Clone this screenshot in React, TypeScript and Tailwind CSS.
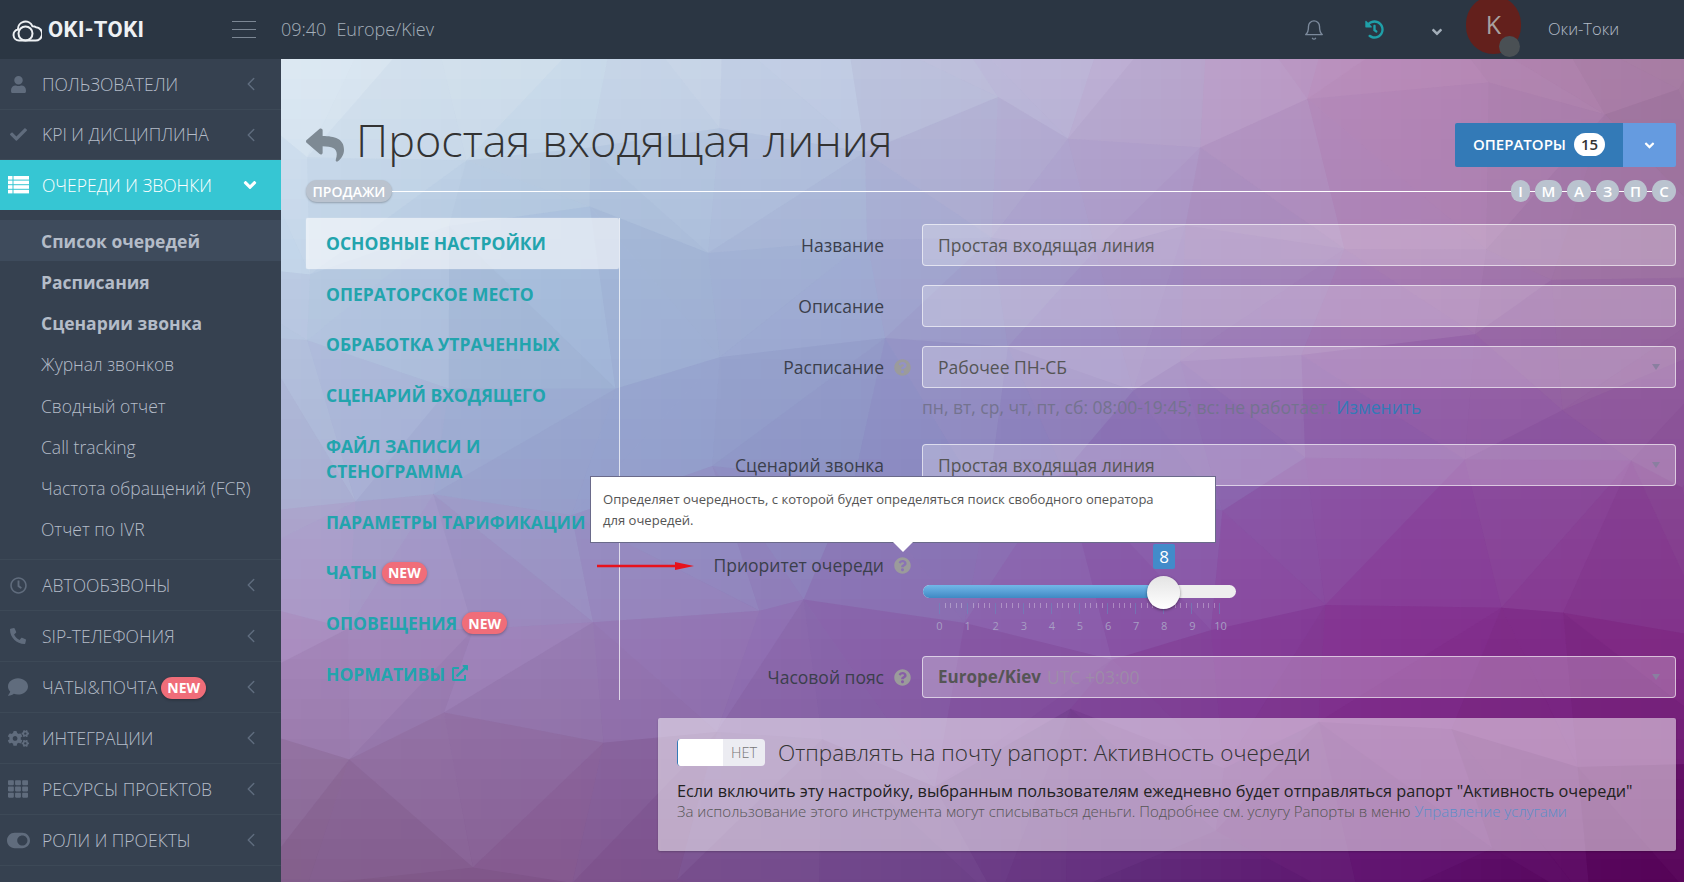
import type { ReactNode } from "react";
import {
  FaAngleDown,
  FaCheck,
  FaCogs,
  FaComment,
  FaExternalLinkAlt,
  FaHistory,
  FaPhone,
  FaQuestionCircle,
  FaRegClock,
  FaReply,
  FaTh,
  FaToggleOn,
  FaUser,
} from "react-icons/fa";
import { FiBell, FiChevronLeft } from "react-icons/fi";

// low-poly backdrop: smooth colour field with a soft jittered mesh on top
const FIELD = [
  ["#e0ebf3", "#cfdeec", "#c0cbe2", "#bdb0d4", "#b98ab9", "#a47a9f"],
  ["#bed1e6", "#a8bfdb", "#a3b0d4", "#a593c4", "#a97fb3", "#9a6f9f"],
  ["#adb5d6", "#96a5cf", "#8c93c5", "#8a73b5", "#8b55a5", "#8a5098"],
  ["#ab8dc0", "#9a80b8", "#8b68ae", "#8a4ea3", "#84308f", "#7f2a85"],
  ["#7d5a85", "#7f5288", "#6f4688", "#5e2a78", "#5c0f6b", "#520052"],
];
const FX = [0, 279, 559, 839, 1119, 1403];
const FY = [0, 191, 391, 591, 823];

function hex(c: string) {
  return [1, 3, 5].map((i) => parseInt(c.slice(i, i + 2), 16));
}

function colorAt(x: number, y: number, shade: number) {
  let i = 0;
  while (i < FX.length - 2 && x > FX[i + 1]) i++;
  let j = 0;
  while (j < FY.length - 2 && y > FY[j + 1]) j++;
  const u = Math.min(1, Math.max(0, (x - FX[i]) / (FX[i + 1] - FX[i])));
  const v = Math.min(1, Math.max(0, (y - FY[j]) / (FY[j + 1] - FY[j])));
  const [a, b, c, d] = [FIELD[j][i], FIELD[j][i + 1], FIELD[j + 1][i], FIELD[j + 1][i + 1]].map(hex);
  const rgb = a.map((_, k) => {
    const top = a[k] + (b[k] - a[k]) * u;
    const bottom = c[k] + (d[k] - c[k]) * u;
    return Math.round(Math.min(255, Math.max(0, top + (bottom - top) * v + shade)));
  });
  return `rgb(${rgb.join(",")})`;
}

function buildMesh() {
  let seed = 17;
  const rnd = () => {
    seed = (seed * 16807) % 2147483647;
    return seed / 2147483647;
  };
  const step = 125;
  const cols = 13;
  const rows = 8;
  const pts: [number, number][][] = [];
  for (let r = 0; r < rows; r++) {
    const row: [number, number][] = [];
    for (let c = 0; c < cols; c++) {
      row.push([(c - 0.5) * step + (rnd() - 0.5) * 85, (r - 0.5) * step + (rnd() - 0.5) * 85]);
    }
    pts.push(row);
  }
  const tris: { p: string; fill: string }[] = [];
  const add = (a: [number, number], b: [number, number], c: [number, number]) => {
    const cx = (a[0] + b[0] + c[0]) / 3;
    const cy = (a[1] + b[1] + c[1]) / 3;
    tris.push({ p: [a, b, c].map((q) => q.join(",")).join(" "), fill: colorAt(cx, cy, (rnd() - 0.5) * 6) });
  };
  for (let r = 0; r < rows - 1; r++) {
    for (let c = 0; c < cols - 1; c++) {
      if (rnd() > 0.5) {
        add(pts[r][c], pts[r][c + 1], pts[r + 1][c]);
        add(pts[r][c + 1], pts[r + 1][c + 1], pts[r + 1][c]);
      } else {
        add(pts[r][c], pts[r][c + 1], pts[r + 1][c + 1]);
        add(pts[r][c], pts[r + 1][c + 1], pts[r + 1][c]);
      }
    }
  }
  return tris;
}

const MESH = buildMesh();

const CELLS: { x: number; y: number; fill: string }[] = [];
for (let y = 0; y < 823; y += 20) {
  for (let x = 0; x < 1403; x += 20) {
    CELLS.push({ x, y, fill: colorAt(x + 10, y + 10, 0) });
  }
}

function Backdrop() {
  return (
    <svg className="absolute inset-0 h-full w-full" viewBox="0 0 1403 823" preserveAspectRatio="none">
      {CELLS.map((c) => (
        <rect key={`${c.x}-${c.y}`} x={c.x} y={c.y} width="21" height="21" fill={c.fill} />
      ))}
      {MESH.map((t, i) => (
        <polygon key={i} points={t.p} fill={t.fill} fillOpacity="0.55" />
      ))}
    </svg>
  );
}

function Logo() {
  return (
    <svg width="30" height="24" viewBox="0 0 30 24" fill="none" stroke="#eef1f4" strokeWidth="2">
      <path d="M7 22.5a5.5 5.5 0 0 1-1-10.9 7.5 7.5 0 0 1 14.4-3.4 5.5 5.5 0 0 1 3.6 1 6.6 6.6 0 0 1-1 13.3z" />
      <circle cx="13.5" cy="15.5" r="7" />
    </svg>
  );
}

// four-row list icon of the active menu entry
function RowsIcon() {
  return (
    <svg width="21" height="18" viewBox="0 0 21 18" fill="currentColor">
      {[0, 4.6, 9.2, 13.8].map((y) => (
        <g key={y}>
          <rect y={y} width="4.5" height="3.6" />
          <rect x="5.5" y={y} width="15.5" height="3.6" />
        </g>
      ))}
    </svg>
  );
}

function NewBadge() {
  return (
    <span className="inline-flex h-[22px] w-[45px] items-center justify-center rounded-full bg-[#f06d79] text-[14px] font-bold text-white shadow-[0_1px_3px_rgba(0,0,0,0.3)]">
      NEW
    </span>
  );
}

interface NavItemProps {
  icon: ReactNode;
  label: string;
  badge?: boolean;
  compact?: boolean;
}

function NavItem({ icon, label, badge, compact }: NavItemProps) {
  return (
    <div className={`flex items-center border-b border-[#3d4957] text-[#b4bcc8] ${compact ? "h-[50px]" : "h-[51px]"}`}>
      <span className="flex w-[42px] justify-center pr-[6px] text-[#606c7d]">{icon}</span>
      <span className="text-[17.5px] font-light">{label}</span>
      {badge && (
        <span className="ml-[4px]">
          <NewBadge />
        </span>
      )}
      <FiChevronLeft className="mr-[19px] ml-auto text-[#5f6c7e]" size={22} strokeWidth={1.6} />
    </div>
  );
}

function SubItem({ label, bold, active }: { label: string; bold?: boolean; active?: boolean }) {
  return (
    <div
      className={`flex h-[41.25px] items-center pl-[41px] text-[17.5px] text-[#b4bcc8] ${
        bold ? "font-bold" : "font-light"
      } ${active ? "bg-[#3e4b5c]" : ""}`}
    >
      {label}
    </div>
  );
}

function Sidebar() {
  return (
    <aside className="w-[281px] shrink-0 bg-[#364150]">
      <NavItem icon={<FaUser size={17} />} label="ПОЛЬЗОВАТЕЛИ" />
      <NavItem compact icon={<FaCheck size={17} />} label="KPI И ДИСЦИПЛИНА" />
      <div className="flex h-[50px] items-center bg-[#36c6d3] text-white">
        <span className="flex w-[42px] justify-center pr-[6px]">
          <RowsIcon />
        </span>
        <span className="text-[17.5px] font-light">ОЧЕРЕДИ И ЗВОНКИ</span>
        <FaAngleDown className="mr-[21px] ml-auto" size={20} />
      </div>
      <div className="mt-[10px] mb-[9px]">
        <SubItem label="Список очередей" bold active />
        <SubItem label="Расписания" bold />
        <SubItem label="Сценарии звонка" bold />
        <SubItem label="Журнал звонков" />
        <SubItem label="Сводный отчет" />
        <SubItem label="Call tracking" />
        <SubItem label="Частота обращений (FCR)" />
        <SubItem label="Отчет по IVR" />
      </div>
      <div className="border-t border-[#3d4957]">
        <NavItem icon={<FaRegClock size={17} />} label="АВТООБЗВОНЫ" />
        <NavItem icon={<FaPhone className="-scale-x-100" size={16} />} label="SIP-ТЕЛЕФОНИЯ" />
        <NavItem icon={<FaComment size={20} />} label="ЧАТЫ&ПОЧТА" badge />
        <NavItem icon={<FaCogs size={21} />} label="ИНТЕГРАЦИИ" />
        <NavItem icon={<FaTh size={20} />} label="РЕСУРСЫ ПРОЕКТОВ" />
        <NavItem icon={<FaToggleOn size={23} />} label="РОЛИ И ПРОЕКТЫ" />
      </div>
    </aside>
  );
}

function Header() {
  return (
    <header className="flex h-[59px] items-center bg-[#2b3643]">
      <div className="flex w-[232px] items-center pl-[12px]">
        <Logo />
        <span className="ml-[6px] font-['Roboto',sans-serif] text-[22px] font-bold tracking-[0.4px] text-[#eef1f4]">
          OKI-TOKI
        </span>
      </div>
      <div className="flex w-[24px] flex-col gap-[7px]">
        <div className="h-px bg-[#7c8794]" />
        <div className="h-px bg-[#7c8794]" />
        <div className="h-px bg-[#7c8794]" />
      </div>
      <span className="ml-[25px] text-[18px] font-light text-[#a3aeb9]">09:40</span>
      <span className="ml-[10px] text-[18px] font-light text-[#a3aeb9]">Europe/Kiev</span>
      <FiBell className="ml-[869px] text-[#7c8a9c]" size={22} strokeWidth={1.5} />
      <FaHistory className="ml-[40px] text-[#1f9fa8]" size={19} />
      <FaAngleDown className="ml-[45px] mt-[4px] text-[#a3aeb9]" size={16} />
      <div className="relative ml-[21px] flex h-[58px] w-[55px] items-center justify-center self-start rounded-full bg-[#63201c] -mt-[4px]">
        <span className="text-[25px] text-[#a8a2a0]">K</span>
        <div className="absolute right-[1px] bottom-[-3px] h-[21px] w-[21px] rounded-full bg-[#4a5054]" />
      </div>
      <span className="ml-[27px] text-[16.5px] font-light text-[#b4bcc8]">Оки-Токи</span>
    </header>
  );
}

function TabLink({ children, active }: { children: ReactNode; active?: boolean }) {
  return (
    <div
      className={`flex min-h-[50.7px] items-center pl-[20px] text-[17.5px] leading-[25px] font-bold text-[#22a4ad] ${
        active ? "rounded-[2px] bg-white/60 shadow-[0_0_1px_rgba(255,255,255,0.8)]" : ""
      }`}
    >
      {children}
    </div>
  );
}

function Tabs() {
  return (
    <nav className="w-[314px] shrink-0 border-r border-white/70">
      <TabLink active>ОСНОВНЫЕ НАСТРОЙКИ</TabLink>
      <TabLink>ОПЕРАТОРСКОЕ МЕСТО</TabLink>
      <TabLink>ОБРАБОТКА УТРАЧЕННЫХ</TabLink>
      <TabLink>СЦЕНАРИЙ ВХОДЯЩЕГО</TabLink>
      <TabLink>
        <span className="py-[13px]">
          ФАЙЛ ЗАПИСИ И
          <br />
          СТЕНОГРАММА
        </span>
      </TabLink>
      <TabLink>ПАРАМЕТРЫ ТАРИФИКАЦИИ</TabLink>
      <TabLink>
        ЧАТЫ
        <span className="ml-[5px] mb-[2px]">
          <NewBadge />
        </span>
      </TabLink>
      <TabLink>
        ОПОВЕЩЕНИЯ
        <span className="ml-[5px] mb-[2px]">
          <NewBadge />
        </span>
      </TabLink>
      <TabLink>
        НОРМАТИВЫ
        <FaExternalLinkAlt className="mb-[3px] ml-[7px]" size={16} />
      </TabLink>
    </nav>
  );
}

function FieldLabel({ text, help }: { text: string; help?: boolean }) {
  return (
    <>
      <span className="w-[264px] shrink-0 text-right text-[17.5px] text-[#3b3f4c]">{text}</span>
      <span className="flex w-[38px] shrink-0 justify-center pr-[2px]">
        {help && <FaQuestionCircle className="text-[#9b9b9b]" size={17} />}
      </span>
    </>
  );
}

function SelectCaret() {
  return <span className="ml-auto h-0 w-0 border-x-[4px] border-t-[6px] border-x-transparent border-t-[#8a7fa0]" />;
}

function Field({ text, help, value, caret }: { text: string; help?: boolean; value?: ReactNode; caret?: boolean }) {
  return (
    <div className="flex items-center">
      <FieldLabel text={text} help={help} />
      <div className="flex h-[42px] flex-1 items-center rounded-[4px] border border-white/60 bg-white/25 px-[15px] text-[17.5px] text-[#555]">
        {value}
        {caret && <SelectCaret />}
      </div>
    </div>
  );
}

function PrioritySlider() {
  return (
    <div className="relative ml-[1px] h-[72px] w-[313px]">
      <div className="absolute top-[-40px] left-[230px] flex h-[25px] w-[22px] items-center justify-center rounded-[2px] bg-[#428bca] text-[17px] text-white">
        8
      </div>
      <div className="mt-[1px] flex h-[13px] overflow-hidden rounded-full bg-[#eeeeee]">
        <div className="w-[240px] bg-gradient-to-b from-[#72b8e8] to-[#3f89c4]" />
      </div>
      <div className="absolute top-[-8px] left-[224px] h-[33px] w-[33px] rounded-full bg-gradient-to-b from-[#e4e4e4] to-white shadow-[0_1px_3px_rgba(0,0,0,0.45)]" />
      <div className="mt-[5px] ml-[16px] flex h-[11px] w-[282px] justify-between">
        {Array.from({ length: 51 }, (_, i) => (
          <span
            key={i}
            className={i % 5 === 0 ? "h-[11px] w-px bg-[#5f8fc0]/50" : "h-[5px] w-px bg-white/30"}
          />
        ))}
      </div>
      <div className="mt-[4px] ml-[16px] flex w-[282px] justify-between text-[11px] text-[#a79ec4]">
        {[0, 1, 2, 3, 4, 5, 6, 7, 8, 9, 10].map((n) => (
          <span key={n} className="flex w-px justify-center">
            {n}
          </span>
        ))}
      </div>
    </div>
  );
}

function Tooltip() {
  return (
    <div className="absolute top-[258px] left-[284px] w-[626px] border border-[#6a6a8a] bg-white px-[12px] pt-[12px] pb-[11px] text-[13.05px] leading-[21px] text-[#555]">
      Определяет очередность, с которой будет определяться поиск свободного оператора
      <br />
      для очередей.
      <span className="absolute top-full left-[302px] h-0 w-0 border-x-[10px] border-t-[10px] border-x-transparent border-t-white" />
    </div>
  );
}

function ArrowMark() {
  return (
    <svg className="absolute top-[343px] left-[291px]" width="98" height="10" viewBox="0 0 98 10">
      <path d="M0 5h84" stroke="#e8121c" strokeWidth="2.5" />
      <path d="M78 1l19 4-19 4z" fill="#e8121c" />
    </svg>
  );
}

function SettingsForm() {
  return (
    <div className="relative flex-1 pt-[6px]">
      <div className="flex flex-col gap-[19px]">
        <Field text="Название" value="Простая входящая линия" />
        <Field text="Описание" />
        <div>
          <Field text="Расписание" help value="Рабочее ПН-СБ" caret />
          <div className="mt-[6px] ml-[302px] h-[24px] text-[17.5px] text-[#74738f]">
            пн, вт, ср, чт, пт, сб: 08:00-19:45; вс: не работает. <span className="text-[#337ab7]">Изменить</span>
          </div>
        </div>
      </div>
      <div className="mt-[26px]">
        <Field text="Сценарий звонка" value="Простая входящая линия" caret />
      </div>
      <div className="mt-[98px] flex items-start">
        <div className="-mt-[32px] flex items-center">
          <FieldLabel text="Приоритет очереди" help />
        </div>
        <PrioritySlider />
      </div>
      <Field
        text="Часовой пояс"
        help
        caret
        value={
          <>
            <b className="text-[17px] font-bold text-[#555]">Europe/Kiev</b>
            <span className="ml-[6px] text-[#9a9aa0]/60">UTC +03:00</span>
          </>
        }
      />
    </div>
  );
}

function ReportPanel() {
  return (
    <section className="mt-[18px] ml-[352px] h-[133px] rounded-[2px] bg-white/50 pt-[18px] pl-[19px] shadow-[0_1px_2px_rgba(0,0,0,0.2)]">
      <div className="flex items-center">
        <div className="flex h-[27px] w-[88px] overflow-hidden rounded-[4px] border-l border-l-[#337ab7] bg-[#ececf2] text-[14.5px] text-[#777]">
          <span className="w-[45px] bg-white" />
          <span className="flex flex-1 items-center justify-center font-light">НЕТ</span>
        </div>
        <h2 className="ml-[13px] text-[22.5px] font-light text-[#333]">Отправлять на почту рапорт: Активность очереди</h2>
      </div>
      <p className="mt-[12px] text-[16.25px] leading-[20px] text-[#222]">
        Если включить эту настройку, выбранным пользователям ежедневно будет отправляться рапорт "Активность очереди"
      </p>
      <p className="text-[15px] leading-[21px] font-light text-[#555]">
        За использование этого инструмента могут списываться деньги. Подробнее см. услугу Рапорты в меню{" "}
        <span className="text-[#5b8ec9]">Управление услугами</span>
      </p>
    </section>
  );
}

function Content() {
  return (
    <main className="relative flex-1 overflow-hidden">
      <Backdrop />
      <div className="relative pt-[54px] pr-[8px] pl-[25px]">
        <div className="flex h-[67px] items-start">
          <FaReply className="mt-[13px] text-[#7e8a94]" size={38} />
          <h1 className="ml-[12px] text-[45px] leading-[54px] font-light text-[#333]">Простая входящая линия</h1>
          <div className="mt-[10px] ml-auto flex h-[44px] text-white">
            <div className="flex w-[168px] items-center rounded-l-[2px] bg-[#337ab7] pb-[2px] pl-[18px] text-[15px] font-semibold">
              ОПЕРАТОРЫ
              <span className="ml-[8px] flex h-[23px] w-[31px] items-center justify-center rounded-full bg-white text-[#333]">
                15
              </span>
            </div>
            <div className="flex w-[53px] items-center justify-center rounded-r-[2px] bg-[#659be0]">
              <FaAngleDown size={15} />
            </div>
          </div>
        </div>
        <div className="flex h-[22px] items-center text-[14px] font-semibold text-white">
          <span className="flex h-[22px] w-[86px] items-center justify-center rounded-full bg-[#bac3cf] shadow-[0_1px_2px_rgba(0,0,0,0.25)]">
            ПРОДАЖИ
          </span>
          <div className="mt-[1px] h-px flex-1 bg-white" />
          {[
            ["I", "w-[19px]"],
            ["М", "w-[27px]"],
            ["А", "w-[24px]"],
            ["З", "w-[23px]"],
            ["П", "w-[23px]"],
            ["С", "w-[24px]"],
          ].map(([letter, width], i) => (
            <span key={letter} className="flex items-center">
              {i > 0 && <span className="mt-[1px] h-px w-[5px] bg-white" />}
              <span className={`flex h-[22px] ${width} items-center justify-center rounded-full bg-[#bac3cf] text-[15px]`}>
                {letter}
              </span>
            </span>
          ))}
        </div>
        <div className="relative mt-[16px] flex">
          <Tabs />
          <SettingsForm />
          <Tooltip />
          <ArrowMark />
        </div>
        <ReportPanel />
      </div>
    </main>
  );
}

export default function App() {
  return (
    <div className="h-[882px] w-[1684px] overflow-hidden font-['Open_Sans',sans-serif]">
      <Header />
      <div className="flex h-[823px]">
        <Sidebar />
        <Content />
      </div>
    </div>
  );
}
